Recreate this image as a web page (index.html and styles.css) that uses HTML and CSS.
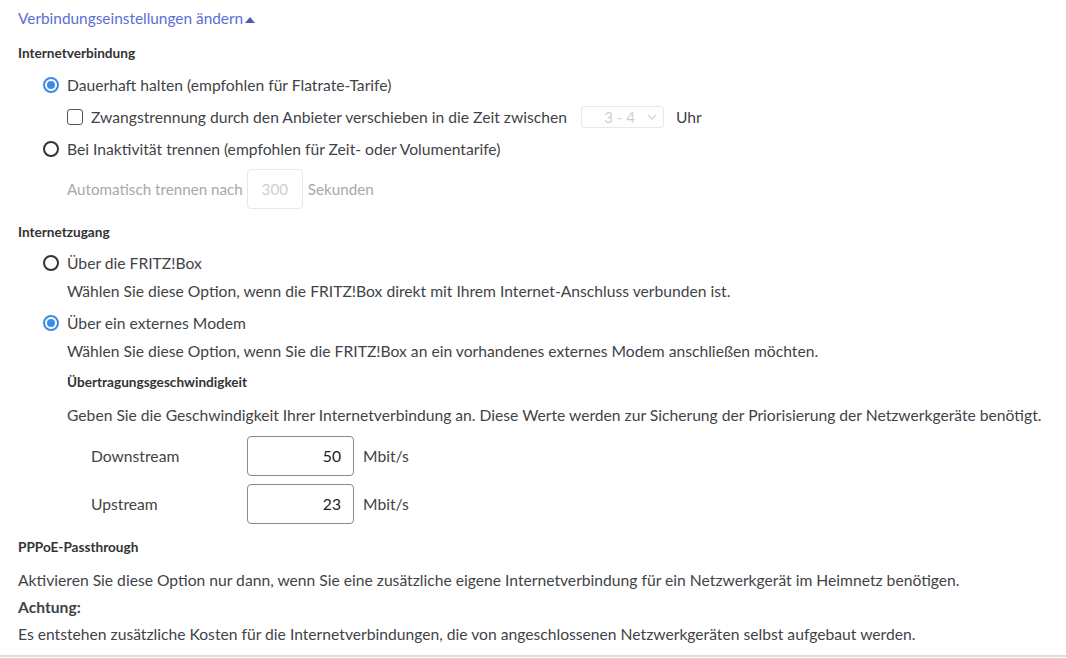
FILE: index.html
```html
<!DOCTYPE html>
<html lang="de">
<head>
<meta charset="utf-8">
<title>Internetzugang</title>
<link rel="stylesheet" href="styles.css">
</head>
<body>
<div class="page">
  <div class="toggle">Verbindungseinstellungen ändern<span class="tri"></span></div>

  <h4 class="sec">Internetverbindung</h4>
  <div class="indent">
    <div class="row r1"><span class="radio on"></span><span>Dauerhaft halten (empfohlen für Flatrate-Tarife)</span></div>
    <div class="sub">
      <div class="row r-cb"><span class="cb"></span><span>Zwangstrennung durch den Anbieter verschieben in die Zeit zwischen</span><span class="select">3 - 4<svg class="chev" viewBox="0 0 10 6" width="10" height="6"><path d="M1 1l4 4 4-4" fill="none" stroke="#d6d6d6" stroke-width="1.5"/></svg></span><span>Uhr</span></div>
    </div>
    <div class="row r2"><span class="radio"></span><span>Bei Inaktivität trennen (empfohlen für Zeit- oder Volumentarife)</span></div>
    <div class="sub">
      <div class="row r-auto dis"><span>Automatisch trennen nach</span><span class="box dbox">300</span><span>Sekunden</span></div>
    </div>
  </div>

  <h4 class="sec s2">Internetzugang</h4>
  <div class="indent">
    <div class="row r3"><span class="radio"></span><span>Über die FRITZ!Box</span></div>
    <p class="desc">Wählen Sie diese Option, wenn die FRITZ!Box direkt mit Ihrem Internet-Anschluss verbunden ist.</p>
    <div class="row r4"><span class="radio on"></span><span>Über ein externes Modem</span></div>
    <p class="desc">Wählen Sie diese Option, wenn Sie die FRITZ!Box an ein vorhandenes externes Modem anschließen möchten.</p>
    <div class="sub">
      <h4 class="sec s3">Übertragungsgeschwindigkeit</h4>
      <p class="info">Geben Sie die Geschwindigkeit Ihrer Internetverbindung an. Diese Werte werden zur Sicherung der Priorisierung der Netzwerkgeräte benötigt.</p>
      <div class="speed">
        <div class="srow"><span class="lbl">Downstream</span><span class="box vbox">50</span><span class="unit">Mbit/s</span></div>
        <div class="srow"><span class="lbl">Upstream</span><span class="box vbox">23</span><span class="unit">Mbit/s</span></div>
      </div>
    </div>
  </div>

  <h4 class="sec s4">PPPoE-Passthrough</h4>
  <div class="pppoe">
    <p>Aktivieren Sie diese Option nur dann, wenn Sie eine zusätzliche eigene Internetverbindung für ein Netzwerkgerät im Heimnetz benötigen.</p>
    <p class="strong">Achtung:</p>
    <p>Es entstehen zusätzliche Kosten für die Internetverbindungen, die von angeschlossenen Netzwerkgeräten selbst aufgebaut werden.</p>
  </div>
</div>
</body>
</html>
```

FILE: styles.css
```css
html, body {
  margin: 0;
  padding: 0;
  background: #ffffff;
}
body {
  font-family: "Source Sans Pro", Lato, "Liberation Sans", sans-serif;
  font-size: 15.66px;
  color: #3f4347;
}
.page {
  padding-left: 18px;
  border-bottom: 2px solid #dcdcdc;
  padding-bottom: 7px;
  width: 1048px;
}
p { margin: 0; }

.toggle {
  height: 36px;
  line-height: 36px;
  color: #5b6fd3;
  display: flex;
  align-items: center;
  font-size: 15.4px;
}
.tri {
  display: inline-block;
  width: 0;
  height: 0;
  border-left: 5px solid transparent;
  border-right: 5px solid transparent;
  border-bottom: 6px solid #4a5fa8;
  margin-left: 2px;
  margin-top: 3px;
}
.sec {
  margin: 8px 0 0 0;
  height: 18px;
  line-height: 18px;
  font-size: 13.6px;
  font-weight: 700;
  color: #333333;
}
.indent { padding-left: 25px; }
.sub { padding-left: 24px; }

.row {
  display: flex;
  align-items: center;
  height: 24px;
}
.r1 { margin-top: 11px; }
.r-cb { margin-top: 8px; }
.r2 { margin-top: 8px; }
.r-auto { margin-top: 8px; height: 40px; }
.radio {
  width: 16px;
  height: 16px;
  box-sizing: border-box;
  border: 2px solid #333;
  border-radius: 50%;
  margin-right: 8px;
  flex: none;
  position: relative;
}
.radio.on { border-color: #3d8be3; }
.radio.on::after {
  content: "";
  position: absolute;
  left: 2px;
  top: 2px;
  width: 8px;
  height: 8px;
  border-radius: 50%;
  background: #3d8be3;
}
.cb {
  width: 16px;
  height: 16px;
  box-sizing: border-box;
  border: 1.5px solid #555;
  border-radius: 3px;
  margin-right: 8px;
  flex: none;
}
.select {
  display: flex;
  align-items: center;
  justify-content: flex-end;
  box-sizing: border-box;
  width: 83px;
  height: 22px;
  border: 1px solid #e8e8e8;
  border-radius: 3px;
  margin-left: 14px;
  margin-right: 12px;
  color: #cfcfcf;
  font-size: 15px;
  padding-right: 6px;
}
.chev { margin-left: 12px; }

.dis { color: #a8a8a8; font-size: 15.2px; }
.box {
  box-sizing: border-box;
  height: 40px;
  border-radius: 4px;
  display: flex;
  align-items: center;
}
.dbox {
  width: 56px;
  border: 1px solid #e8e8e8;
  color: #d0d0d0;
  justify-content: center;
  margin: 0 5px 0 4px;
}
.s2 { margin-top: 14px; }
.r3 { margin-top: 10px; }
.r4 { margin-top: 8px; }
.desc {
  padding-left: 24px;
  height: 24px;
  line-height: 24px;
  margin-top: 4px;
}
.s3 { margin-top: 10px; }
.info {
  height: 24px;
  line-height: 24px;
  margin-top: 12px;
}
.speed {
  padding-left: 24px;
  margin-top: 9px;
  display: flex;
  flex-direction: column;
  gap: 8px;
}
.srow {
  display: flex;
  align-items: center;
  height: 40px;
}
.lbl { width: 156px; }
.vbox {
  width: 107px;
  border: 1px solid #8a8a8a;
  justify-content: flex-end;
  padding-right: 12px;
  color: #222;
}
.unit { margin-left: 9px; }
.s4 { margin-top: 14px; }
.pppoe {
  margin-top: 11px;
  line-height: 27px;
}
.strong { font-weight: 700; }
```
